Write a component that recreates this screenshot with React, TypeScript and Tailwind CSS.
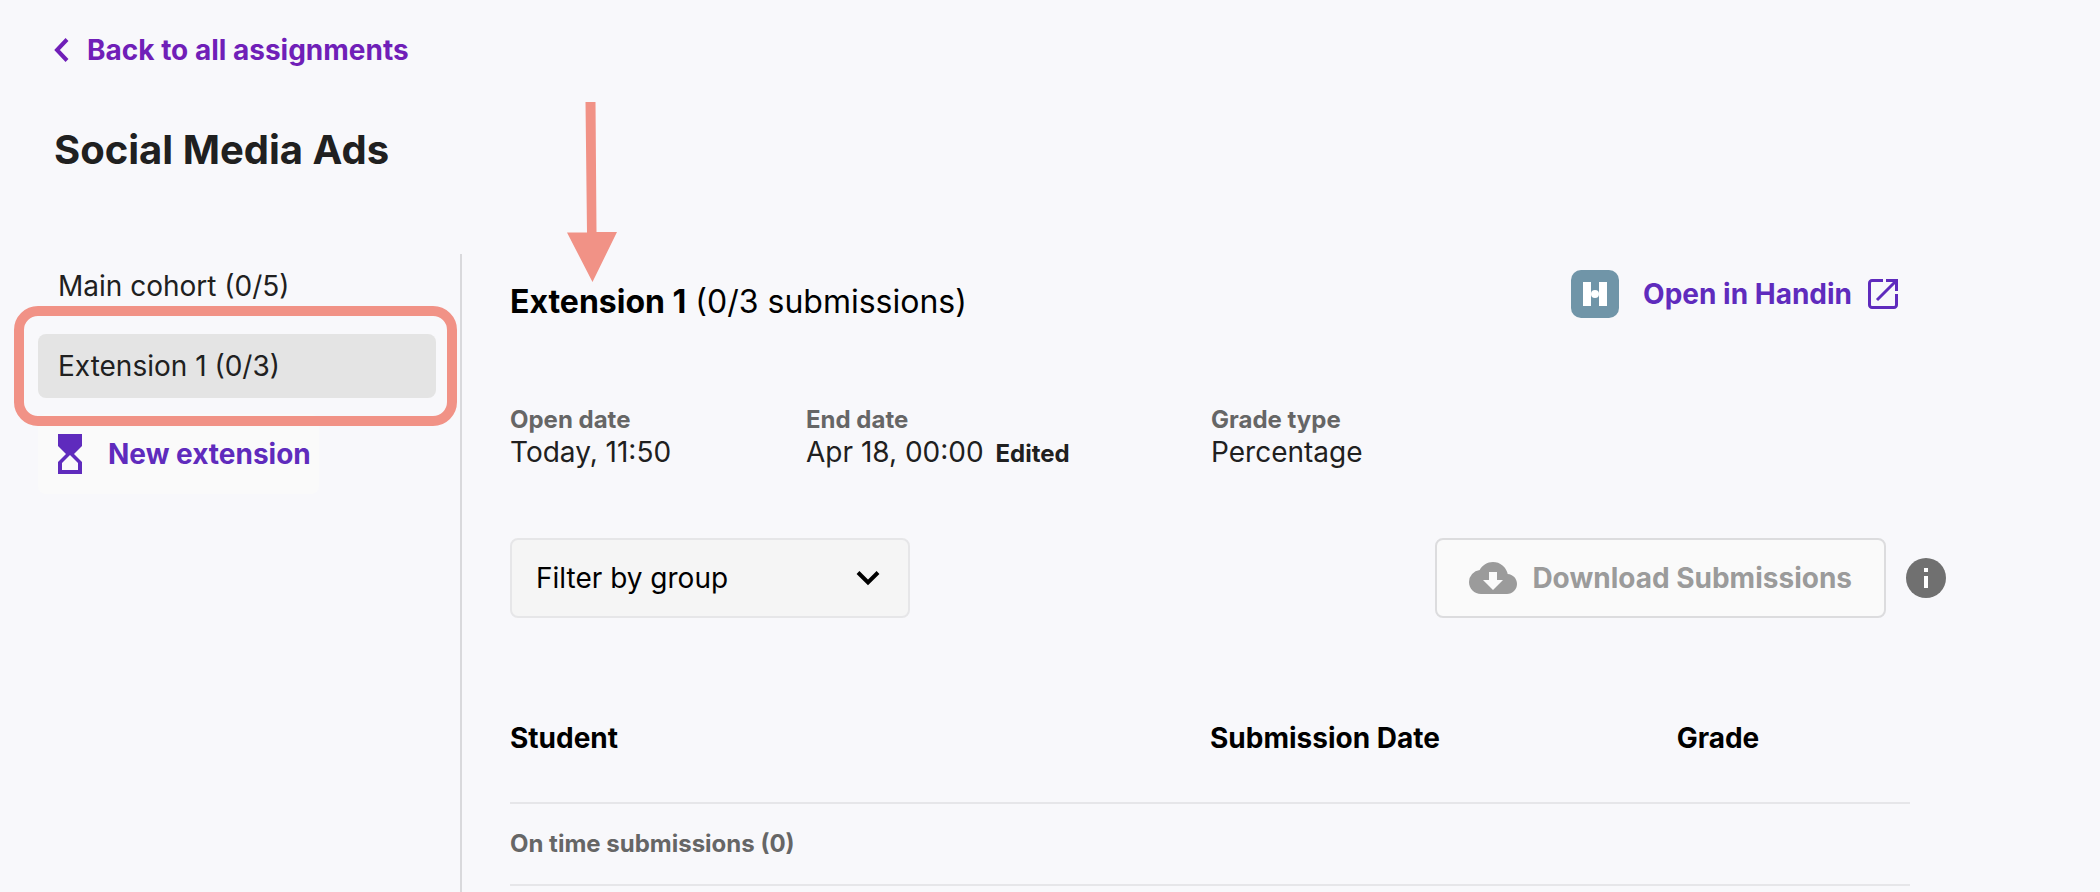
import { useState } from "react";
import type { ReactNode } from "react";
import { MdCloudDownload } from "react-icons/md";

const COHORTS = [
  { id: "main", label: "Main cohort (0/5)" },
  { id: "ext-1", label: "Extension 1 (0/3)" },
];

export default function App() {
  const [selected, setSelected] = useState("ext-1");

  return (
    <div className="min-h-screen bg-[#f8f8fb] pt-8 font-['Inter',sans-serif] text-[28px] leading-9 text-[#202020]">
      <header className="px-[54px]">
        <a href="#assignments" className="inline-flex items-center gap-[18px] font-bold text-[#701fb8]">
          <svg width="15" height="24" viewBox="0 0 15 24" fill="none" stroke="currentColor" strokeWidth="4">
            <path d="M13 1.500 3 12l10 10.500" />
          </svg>
          Back to all assignments
        </a>
        <h1 className="mt-14 text-[40px] leading-[48px] font-bold">Social Media Ads</h1>
      </header>

      <div className="mt-20 flex">
        {/* Cohorts */}
        <nav className="flex w-[460px] shrink-0 flex-col gap-4 pr-6 pl-[38px]">
          {COHORTS.map((c) => (
            <div key={c.id} className="relative">
              <button
                onClick={() => setSelected(c.id)}
                className={`h-16 w-full rounded-lg px-5 text-left ${c.id === selected ? "bg-[#e4e4e4]" : ""}`}
              >
                {c.label}
              </button>
              {c.id === selected && (
                <div className="pointer-events-none absolute -inset-y-7 -right-[21px] -left-6 rounded-3xl border-10 border-[#f19286]" />
              )}
            </div>
          ))}
          <button className="flex h-20 items-center gap-[26px] self-start rounded-lg bg-[#fafafa] pr-2 pl-5 font-bold text-[#5f2bbd]">
            <HourglassIcon />
            New extension
          </button>
        </nav>

        <main className="min-h-[638px] min-w-0 flex-1 border-l-2 border-[#d9d9dc] pr-[154px] pl-12">
          <div className="flex items-start justify-between pt-4 pr-12">
            <h2 className="relative pt-3 text-[32px] leading-10 text-black">
              <ArrowMark />
              <strong className="font-bold">Extension 1</strong> (0/3 submissions)
            </h2>
            <a href="#handin" className="flex items-center font-bold text-[#5f2bbd]">
              <HandinLogo />
              <span className="mr-4 ml-6">Open in Handin</span>
              <ExternalIcon />
            </a>
          </div>

          {/* Dates */}
          <dl className="mt-[82px] flex">
            <Field label="Open date" className="w-[296px]">Today, 11:50</Field>
            <Field label="End date" className="w-[405px]">
              Apr 18, 00:00 <strong className="ml-1 text-[24px] font-bold">Edited</strong>
            </Field>
            <Field label="Grade type" className="">Percentage</Field>
          </dl>

          <div className="mt-[68px] flex items-center justify-between">
            <div className="relative w-[400px]">
              <select
                aria-label="Filter by group"
                className="block h-20 w-full appearance-none rounded-lg border-2 border-[#e6e6e8] bg-[#f5f5f5] px-6 text-black"
              >
                <option>Filter by group</option>
              </select>
              <svg className="pointer-events-none absolute top-8 right-[30px]" width="24" height="16" viewBox="0 0 24 16" fill="none" stroke="black" strokeWidth="4">
                <path d="m2 2.500 10 10 10-10" />
              </svg>
            </div>
            <div className="flex items-center gap-5">
              <button disabled className="flex h-20 items-center gap-[15px] rounded-lg border-2 border-[#dcdcde] bg-[#fafafa] px-8 font-bold text-[#9b9b9b]">
                <MdCloudDownload size={48} />
                Download Submissions
              </button>
              <button aria-label="About downloads" className="size-10 rounded-full">
                <InfoIcon />
              </button>
            </div>
          </div>

          {/* Submissions */}
          <div className="mt-[65px] pr-9">
            <table className="w-full table-fixed text-left">
              <thead>
                <tr className="h-[120px] border-b-2 border-[#e6e6e9] text-black">
                  <th className="w-1/2 pb-[10px] font-bold">Student</th>
                  <th className="w-1/3 pb-[10px] font-bold">Submission Date</th>
                  <th className="w-1/6 pb-[10px] font-bold">Grade</th>
                </tr>
              </thead>
              <tbody>
                <tr className="h-[82px] border-b-2 border-[#e6e6e9]">
                  <th colSpan={3} className="text-[24px] font-bold text-[#666]">On time submissions (0)</th>
                </tr>
              </tbody>
            </table>
          </div>
        </main>
      </div>
    </div>
  );
}

function Field({ label, className, children }: { label: string; className: string; children: ReactNode }) {
  return (
    <div className={className}>
      <dt className="text-[24px] leading-8 font-bold text-[#666]">{label}</dt>
      <dd className="leading-8">{children}</dd>
    </div>
  );
}

function ArrowMark() {
  return (
    <svg className="pointer-events-none absolute bottom-full left-[57px] -mb-3" width="50" height="180" viewBox="0 0 50 180" fill="#f19286">
      <path d="M18.500 0h10l1 130H50L25.500 180 0 130.500h20z" />
    </svg>
  );
}

function HourglassIcon() {
  return (
    <svg width="24" height="40" viewBox="0 0 24 40" fill="currentColor">
      <path fillRule="evenodd" d="M0 0h24v12l-8 8 8 8v12H0V28l8-8-8-8zm12 21-8 8v7h16v-7z" />
    </svg>
  );
}

function HandinLogo() {
  return (
    <svg width="48" height="48" viewBox="0 0 48 48">
      <rect width="48" height="48" rx="10" fill="#7095a8" />
      <path fill="white" d="M12 12h8v24h-8zm16 0h8v24h-8z" />
      <circle cx="24" cy="24" r="4" fill="white" />
    </svg>
  );
}

function ExternalIcon() {
  return (
    <svg width="30" height="30" viewBox="0 0 30 30" fill="none" stroke="currentColor" strokeWidth="3">
      <path d="M15 1.500H4A2.500 2.500 0 0 0 1.500 4v22A2.500 2.500 0 0 0 4 28.500h22a2.500 2.500 0 0 0 2.500-2.500V15M18 1.500h10.500V12M28.500 1.500 9 21" />
    </svg>
  );
}

function InfoIcon() {
  return (
    <svg width="40" height="40" viewBox="0 0 40 40">
      <circle cx="20" cy="20" r="20" fill="#707070" />
      <path fill="white" d="M18 10h4v4h-4zm0 8h4v12h-4z" />
    </svg>
  );
}
